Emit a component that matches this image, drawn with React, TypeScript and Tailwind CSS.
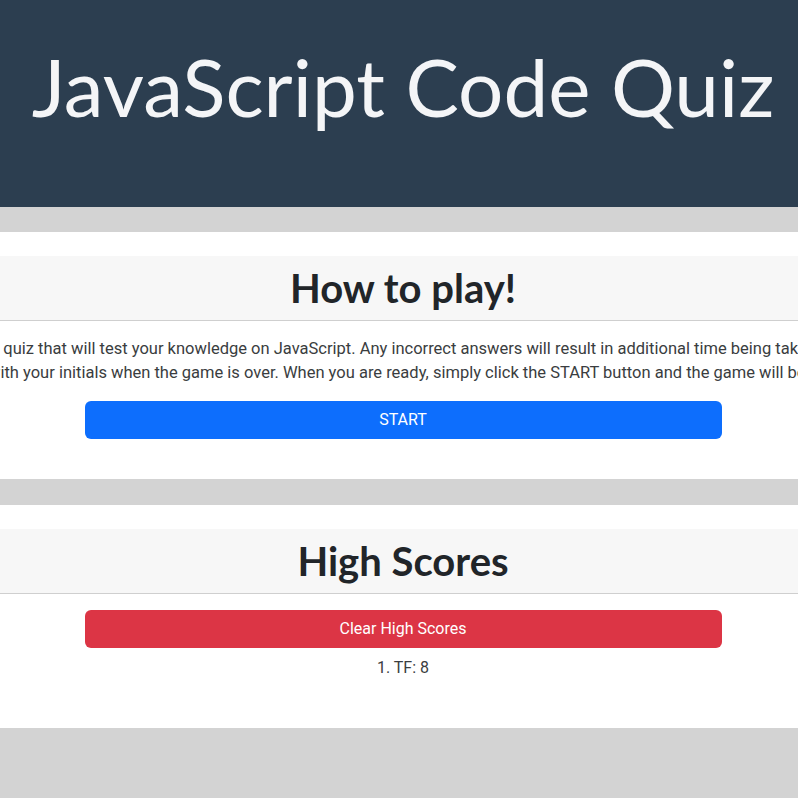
export default function App() {
  const heading = { fontFamily: '"Lato", "Noto Sans", sans-serif' };
  const body = { fontFamily: 'Roboto, "Noto Sans", sans-serif' };
  return (
    <div className="min-h-[798px] bg-[#d3d3d3] overflow-hidden text-[#212529]" style={body}>
      <header className="bg-[#2c3e50] h-[207px] flex justify-center pt-[38px]">
        <h1
          className="text-[80px] font-normal leading-[1.2] text-[#f4f5f7] whitespace-nowrap pl-[8px]"
          style={heading}
        >
          JavaScript Code Quiz
        </h1>
      </header>

      <section className="mt-[25px] bg-white py-6">
        <div className="bg-[#f7f7f7] border-b border-[#cfcfcf] h-[65px] flex items-center justify-center pl-[8px]">
          <h2 className="text-[40px] font-bold leading-none" style={heading}>
            How to play!
          </h2>
        </div>
        <div className="p-4 pl-[24px] flex flex-col items-center">
          <div className="flex flex-col items-center text-[16.5px] leading-6 text-[#3a3d40]">
            <p className="whitespace-nowrap">
              a quiz that will test your knowledge on JavaScript. Any incorrect answers will result in additional time being taken
            </p>
            <p className="whitespace-nowrap pl-[10px]">
              with your initials when the game is over. When you are ready, simply click the START button and the game will begin
            </p>
          </div>
          <button className="mt-4 w-[637px] h-[38px] rounded-md bg-[#0d6efd] text-white text-base">
            START
          </button>
        </div>
      </section>

      <section className="mt-[26px] bg-white pt-6 pb-8">
        <div className="bg-[#f7f7f7] border-b border-[#cfcfcf] h-[65px] flex items-center justify-center pl-[8px]">
          <h2 className="text-[40px] font-bold leading-none" style={heading}>
            High Scores
          </h2>
        </div>
        <div className="p-4 pl-[24px] flex flex-col items-center">
          <button className="w-[637px] h-[38px] rounded-md bg-[#dc3545] text-white text-base">
            Clear High Scores
          </button>
          <p className="mt-2 text-base leading-6 text-[#3a3d40]">1. TF: 8</p>
        </div>
      </section>
    </div>
  );
}
